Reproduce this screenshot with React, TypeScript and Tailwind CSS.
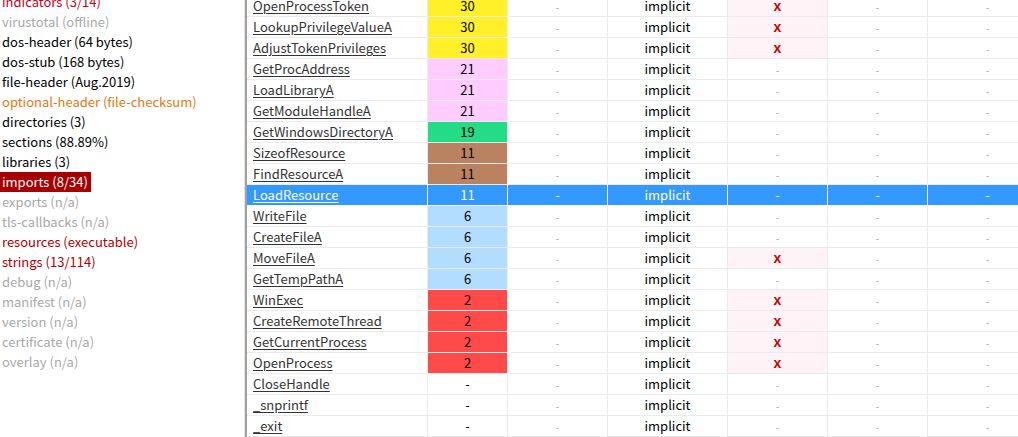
const font = { fontFamily: '"Noto Sans CJK SC", "Noto Sans", sans-serif' }

type Tone = 'red' | 'gray' | 'black' | 'orange' | 'dark'

const tree: { label: string; tone: Tone; active?: boolean }[] = [
  { label: 'indicators (3/14)', tone: 'red' },
  { label: 'virustotal (offline)', tone: 'gray' },
  { label: 'dos-header (64 bytes)', tone: 'black' },
  { label: 'dos-stub (168 bytes)', tone: 'black' },
  { label: 'file-header (Aug.2019)', tone: 'black' },
  { label: 'optional-header (file-checksum)', tone: 'orange' },
  { label: 'directories (3)', tone: 'black' },
  { label: 'sections (88.89%)', tone: 'black' },
  { label: 'libraries (3)', tone: 'black' },
  { label: 'imports (8/34)', tone: 'black', active: true },
  { label: 'exports (n/a)', tone: 'gray' },
  { label: 'tls-callbacks (n/a)', tone: 'gray' },
  { label: 'resources (executable)', tone: 'dark' },
  { label: 'strings (13/114)', tone: 'dark' },
  { label: 'debug (n/a)', tone: 'gray' },
  { label: 'manifest (n/a)', tone: 'gray' },
  { label: 'version (n/a)', tone: 'gray' },
  { label: 'certificate (n/a)', tone: 'gray' },
  { label: 'overlay (n/a)', tone: 'gray' },
]

const toneClass: Record<Tone, string> = {
  red: 'text-[#c8001e]',
  gray: 'text-[#a8a8a8]',
  black: 'text-black',
  orange: 'text-[#e07a10]',
  dark: 'text-[#b00000]',
}

type Sev = 'yellow' | 'pink' | 'green' | 'brown' | 'blue' | 'red' | 'none'

const sevClass: Record<Sev, string> = {
  yellow: 'bg-[#fff02a]',
  pink: 'bg-[#ffccff]',
  green: 'bg-[#24dc88]',
  brown: 'bg-[#bb8262]',
  blue: 'bg-[#b3ddff]',
  red: 'bg-[#ff4a4a]',
  none: 'bg-white',
}

const rows: { name: string; score: string; sev: Sev; flag?: boolean; selected?: boolean }[] = [
  { name: 'OpenProcessToken', score: '30', sev: 'yellow', flag: true },
  { name: 'LookupPrivilegeValueA', score: '30', sev: 'yellow', flag: true },
  { name: 'AdjustTokenPrivileges', score: '30', sev: 'yellow', flag: true },
  { name: 'GetProcAddress', score: '21', sev: 'pink' },
  { name: 'LoadLibraryA', score: '21', sev: 'pink' },
  { name: 'GetModuleHandleA', score: '21', sev: 'pink' },
  { name: 'GetWindowsDirectoryA', score: '19', sev: 'green' },
  { name: 'SizeofResource', score: '11', sev: 'brown' },
  { name: 'FindResourceA', score: '11', sev: 'brown' },
  { name: 'LoadResource', score: '11', sev: 'brown', selected: true },
  { name: 'WriteFile', score: '6', sev: 'blue' },
  { name: 'CreateFileA', score: '6', sev: 'blue' },
  { name: 'MoveFileA', score: '6', sev: 'blue', flag: true },
  { name: 'GetTempPathA', score: '6', sev: 'blue' },
  { name: 'WinExec', score: '2', sev: 'red', flag: true },
  { name: 'CreateRemoteThread', score: '2', sev: 'red', flag: true },
  { name: 'GetCurrentProcess', score: '2', sev: 'red', flag: true },
  { name: 'OpenProcess', score: '2', sev: 'red', flag: true },
  { name: 'CloseHandle', score: '-', sev: 'none' },
  { name: '_snprintf', score: '-', sev: 'none' },
  { name: '_exit', score: '-', sev: 'none' },
]

function Dash({ light }: { light?: boolean }) {
  return <span className={light ? 'text-white' : 'text-[#a0a0a0] text-[10px]'}>-</span>
}

export default function App() {
  return (
    <div className="flex h-[437px] w-[1018px] overflow-hidden bg-white text-[13px]" style={font}>
      {/* tree */}
      <div className="w-[244px] shrink-0 -mt-[8px]">
        {tree.map((t) => (
          <div key={t.label} className="h-5 flex items-center">
            <span
              className={
                t.active
                  ? 'bg-[#a80000] text-white pl-[2px] pr-[3px] h-5 leading-5'
                  : `pl-[2px] leading-5 ${toneClass[t.tone]}`
              }
            >
              {t.label}
            </span>
          </div>
        ))}
      </div>

      {/* splitter */}
      <div className="w-[3px] shrink-0 border-l border-[#e4e4e4] bg-[#a0a0a0]" />

      {/* table */}
      <div className="-mt-[4px] flex-1 min-w-0">
        {rows.map((r) => {
          const sel = r.selected
          const cell = `h-full flex items-center justify-center border-r ${sel ? 'border-white' : 'border-[#ebebeb]'}`
          return (
            <div
              key={r.name}
              className={`flex h-[21px] border-b ${sel ? 'bg-[#3399ff] border-white' : 'border-[#ebebeb]'}`}
            >
              <div className={`w-[181px] shrink-0 h-full flex items-center pl-[6px] border-r ${sel ? 'border-white' : 'border-[#ebebeb]'}`}>
                <span className={`underline underline-offset-2 ${sel ? 'text-white' : 'text-[#333]'}`}>{r.name}</span>
              </div>
              <div className={`w-[80px] shrink-0 ${cell} ${sel ? '' : sevClass[r.sev]} ${sel ? 'text-white' : 'text-black'}`}>
                {r.score}
              </div>
              <div className={`w-[100px] shrink-0 ${cell}`}>
                <Dash light={sel} />
              </div>
              <div className={`w-[120px] shrink-0 ${cell} ${sel ? 'text-white' : 'text-black'}`}>implicit</div>
              <div className={`w-[100px] shrink-0 ${cell} ${r.flag && !sel ? 'bg-[#fff3f7]' : ''}`}>
                {r.flag ? (
                  <span className="font-bold text-[#c80000] text-[14px] leading-none" style={{ fontFamily: '"Liberation Sans", sans-serif' }}>
                    x
                  </span>
                ) : (
                  <Dash light={sel} />
                )}
              </div>
              <div className={`w-[100px] shrink-0 ${cell}`}>
                <Dash light={sel} />
              </div>
              <div className={`w-[120px] shrink-0 ${cell}`}>
                <Dash light={sel} />
              </div>
            </div>
          )
        })}
      </div>
    </div>
  )
}
